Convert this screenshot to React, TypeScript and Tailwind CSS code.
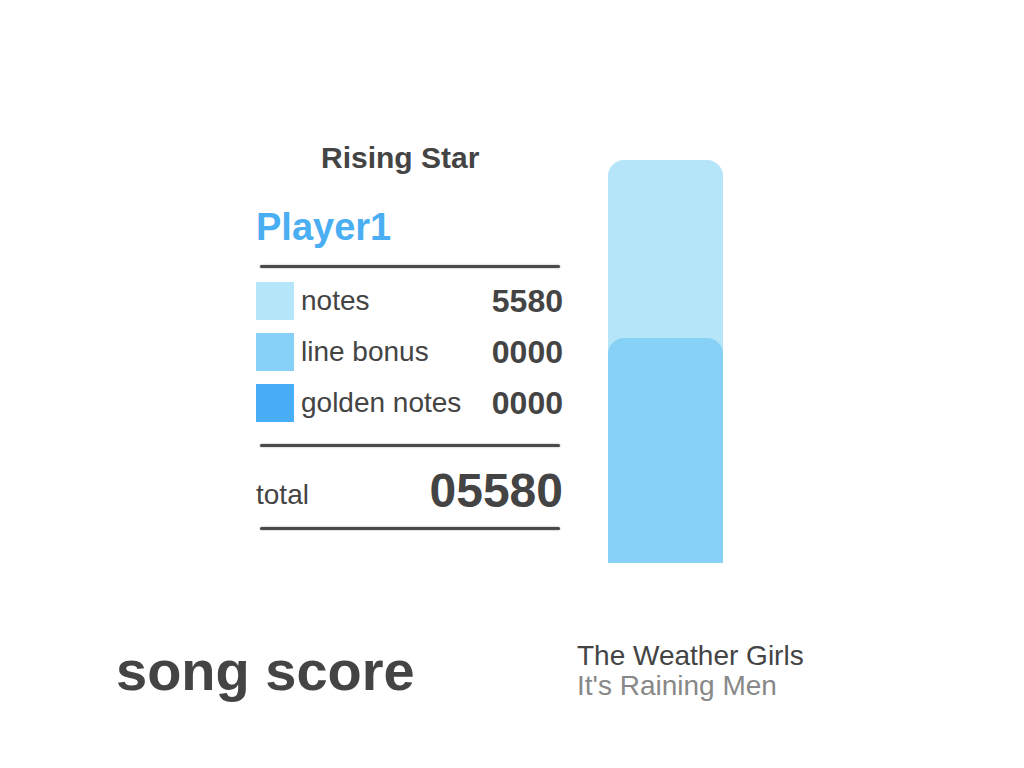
const rows = [
  { label: 'notes', value: '5580', color: 'bg-[#b5e5f9]' },
  { label: 'line bonus', value: '0000', color: 'bg-[#87d0f7]' },
  { label: 'golden notes', value: '0000', color: 'bg-[#48aef6]' },
];

const Rule = () => (
  <div className="mx-[4px] h-[3px] w-[300px] rounded-full bg-[#4a4a4a] shadow-[0_0_2px_#9a9a9a]" />
);

export default function App() {
  return (
    <div className="flex h-[768px] w-full flex-col bg-white font-['Liberation_Sans',Arial,sans-serif] text-[#444]">
      <div className="flex pl-[256px] pt-[143px]">
        {/* score panel */}
        <div className="flex w-[307px] flex-col">
          <div className="ml-[65px] text-[30px] font-bold leading-none">Rising Star</div>
          <div className="mt-[35px] text-[38px] font-bold leading-none text-[#4aaef2]">Player1</div>
          <div className="mt-[19px]">
            <Rule />
          </div>
          <div className="mt-[14px] flex flex-col gap-[13px]">
            {rows.map((r) => (
              <div key={r.label} className="flex h-[38px] items-center">
                <div className={`h-[38px] w-[38px] ${r.color}`} />
                <span className="ml-[7px] text-[28px] leading-none">{r.label}</span>
                <span className="ml-auto text-[32px] font-bold leading-none">{r.value}</span>
              </div>
            ))}
          </div>
          <div className="mt-[22px]">
            <Rule />
          </div>
          <div className="mt-[20px] flex items-end justify-between">
            <span className="mb-[6px] text-[28px] leading-none">total</span>
            <span className="text-[48px] font-bold leading-none">05580</span>
          </div>
          <div className="mt-[12px]">
            <Rule />
          </div>
        </div>

        {/* score bar */}
        <div className="ml-[45px] mt-[17px] flex h-[403px] w-[115px] flex-col rounded-t-[16px] bg-[#b5e5f8]">
          <div className="mt-auto h-[225px] rounded-t-[16px] bg-[#87d0f6]" />
        </div>
      </div>

      <div className="mt-[77px] flex pl-[116px]">
        <div className="mt-[3px] w-[461px] text-[56px] font-bold leading-none">song score</div>
        <div className="mt-[1px] flex flex-col text-[28px] leading-[30px]">
          <span>The Weather Girls</span>
          <span className="text-[#888]">It's Raining Men</span>
        </div>
      </div>
    </div>
  );
}
